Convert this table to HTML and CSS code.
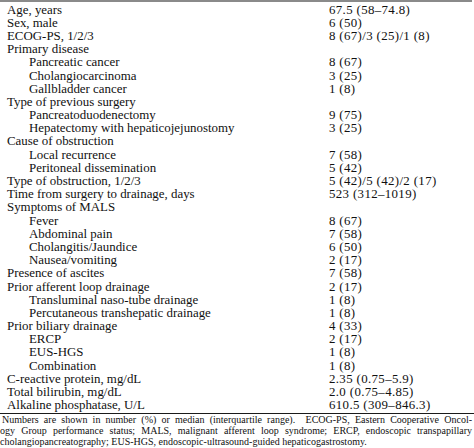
FILE: index.html
```html
<!DOCTYPE html>
<html>
<head>
<meta charset="utf-8">
<link rel="stylesheet" href="styles.css">
</head>
<body>
<div class="page">
  <div class="top-rule"></div>
  <div class="tbl">
    <div class="lbl">Age, years</div><div class="val">67.5 (58–74.8)</div>
    <div class="lbl">Sex, male</div><div class="val">6 (50)</div>
    <div class="lbl">ECOG-PS, 1/2/3</div><div class="val">8 (67)/3 (25)/1 (8)</div>
    <div class="lbl">Primary disease</div><div class="val"></div>
    <div class="lbl sub">Pancreatic cancer</div><div class="val">8 (67)</div>
    <div class="lbl sub">Cholangiocarcinoma</div><div class="val">3 (25)</div>
    <div class="lbl sub">Gallbladder cancer</div><div class="val">1 (8)</div>
    <div class="lbl">Type of previous surgery</div><div class="val"></div>
    <div class="lbl sub">Pancreatoduodenectomy</div><div class="val">9 (75)</div>
    <div class="lbl sub">Hepatectomy with hepaticojejunostomy</div><div class="val">3 (25)</div>
    <div class="lbl">Cause of obstruction</div><div class="val"></div>
    <div class="lbl sub">Local recurrence</div><div class="val">7 (58)</div>
    <div class="lbl sub">Peritoneal dissemination</div><div class="val">5 (42)</div>
    <div class="lbl">Type of obstruction, 1/2/3</div><div class="val">5 (42)/5 (42)/2 (17)</div>
    <div class="lbl">Time from surgery to drainage, days</div><div class="val">523 (312–1019)</div>
    <div class="lbl">Symptoms of MALS</div><div class="val"></div>
    <div class="lbl sub">Fever</div><div class="val">8 (67)</div>
    <div class="lbl sub">Abdominal pain</div><div class="val">7 (58)</div>
    <div class="lbl sub">Cholangitis/Jaundice</div><div class="val">6 (50)</div>
    <div class="lbl sub">Nausea/vomiting</div><div class="val">2 (17)</div>
    <div class="lbl">Presence of ascites</div><div class="val">7 (58)</div>
    <div class="lbl">Prior afferent loop drainage</div><div class="val">2 (17)</div>
    <div class="lbl sub">Transluminal naso-tube drainage</div><div class="val">1 (8)</div>
    <div class="lbl sub">Percutaneous transhepatic drainage</div><div class="val">1 (8)</div>
    <div class="lbl">Prior biliary drainage</div><div class="val">4 (33)</div>
    <div class="lbl sub">ERCP</div><div class="val">2 (17)</div>
    <div class="lbl sub">EUS-HGS</div><div class="val">1 (8)</div>
    <div class="lbl sub">Combination</div><div class="val">1 (8)</div>
    <div class="lbl">C-reactive protein, mg/dL</div><div class="val">2.35 (0.75–5.9)</div>
    <div class="lbl">Total bilirubin, mg/dL</div><div class="val">2.0 (0.75–4.85)</div>
    <div class="lbl">Alkaline phosphatase, U/L</div><div class="val">610.5 (309–846.3)</div>
  </div>
  <div class="bottom-rule"></div>
  <div class="note">
    <div class="note-line first">Numbers are shown in number (%) or median (interquartile range).&nbsp; ECOG-PS, Eastern Cooperative Oncol-</div>
    <div class="note-line">ogy Group performance status; MALS, malignant afferent loop syndrome; ERCP, endoscopic transpapillary</div>
    <div class="note-line last">cholangiopancreatography; EUS-HGS, endoscopic-ultrasound-guided hepaticogastrostomy.</div>
  </div>
</div>
</body>
</html>
```

FILE: styles.css
```css
html, body {
  margin: 0;
  padding: 0;
  background: #ffffff;
}

.page {
  width: 474px;
  height: 448px;
  overflow: hidden;
  font-family: "Liberation Serif", "Times New Roman", serif;
  color: #111111;
}

.top-rule {
  height: 2px;
  width: 472px;
  background: #8a8a8a;
}

.tbl {
  display: grid;
  grid-template-columns: 329px 1fr;
  grid-auto-rows: 13.2px;
  padding-top: 1.6px;
  font-size: 12.9px;
  line-height: 13.2px;
}

.lbl,
.val {
  white-space: nowrap;
}

.lbl {
  padding-left: 7px;
}

.lbl.sub {
  padding-left: 29px;
}

.val {
  letter-spacing: 0.35px;
}

.bottom-rule {
  height: 1px;
  background: #1a1a1a;
  margin-top: 1px;
}

.note {
  font-size: 10px;
  line-height: 11px;
}

.note-line {
  text-align: justify;
  text-align-last: justify;
  width: 472px;
}

.note-line.first {
  padding-left: 2px;
  width: 470px;
}

.note-line.last {
  text-align-last: left;
}
```
